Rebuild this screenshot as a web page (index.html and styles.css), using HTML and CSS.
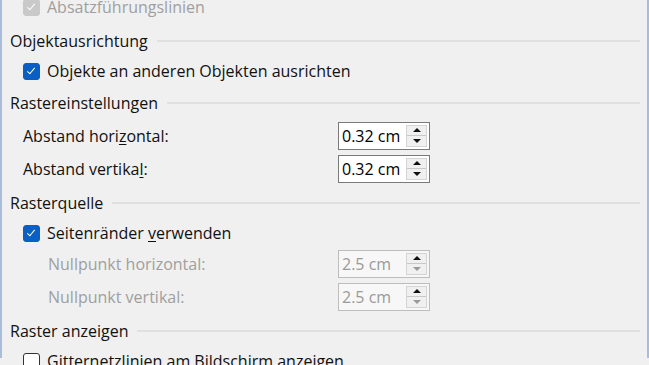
FILE: index.html
```html
<html>
<head>
    <meta charset="utf-8" />
    <title>Optionen - Raster</title>
    <link rel="stylesheet" href="styles.css">
</head>
<body>
    <div class="dialog">
        <div class="section first">
            <div class="row check disabled">
                <span class="box on"></span>
                <span>Absatzführungslinien</span>
            </div>
        </div>

        <div class="section">
            <div class="heading"><span>Objektausrichtung</span></div>
            <div class="row check">
                <span class="box on"></span>
                <span>Ob<u>j</u>ekte an anderen Objekten ausrichten</span>
            </div>
        </div>

        <div class="section">
            <div class="heading"><span>Rastereinstellungen</span></div>
            <div class="row field">
                <label>Abstand hori<u>z</u>ontal:</label>
                <div class="spin">
                    <span class="value">0.32 cm</span>
                    <span class="arrows"><i class="up"></i><i class="down"></i></span>
                </div>
            </div>
            <div class="row field">
                <label>Abstand vertika<u>l</u>:</label>
                <div class="spin">
                    <span class="value">0.32 cm</span>
                    <span class="arrows"><i class="up"></i><i class="down"></i></span>
                </div>
            </div>
        </div>

        <div class="section">
            <div class="heading"><span>Rasterquelle</span></div>
            <div class="row check">
                <span class="box on"></span>
                <span>Seitenränder <u>v</u>erwenden</span>
            </div>
            <div class="row field sub disabled">
                <label>Nullpunkt horizontal:</label>
                <div class="spin">
                    <span class="value">2.5 cm</span>
                    <span class="arrows"><i class="up"></i><i class="down"></i></span>
                </div>
            </div>
            <div class="row field sub disabled">
                <label>Nullpunkt vertikal:</label>
                <div class="spin">
                    <span class="value">2.5 cm</span>
                    <span class="arrows"><i class="up"></i><i class="down"></i></span>
                </div>
            </div>
        </div>

        <div class="section">
            <div class="heading"><span>Raster anzeigen</span></div>
            <div class="row check">
                <span class="box"></span>
                <span>Gitternetzlinien am Bildschirm anzeigen</span>
            </div>
        </div>
    </div>
</body>
</html>
```

FILE: styles.css
```css
html, body {
    margin: 0;
    height: 100%;
    overflow: hidden;
}
body {
    background-color: #f0f0f0;
    font-family: "Open Sans", "Noto Sans", sans-serif;
    font-size: 16px;
    color: #111;
}
.dialog {
    box-sizing: border-box;
    height: 100%;
    border-left: 2px solid #a9bcdb;
    border-right: 2px solid #a9bcdb;
    padding: 0 7px 0 8px;
}
.section {
    margin-bottom: 2px;
}
.section.first {
    margin-top: -7px;
    margin-bottom: 4px;
}
.heading {
    height: 32px;
    display: flex;
    flex-direction: row;
    align-items: center;
}
.heading::after {
    content: "";
    flex: 1;
    height: 2px;
    margin-left: 9px;
    background-color: #e0e0e0;
}
.row {
    display: flex;
    flex-direction: row;
    align-items: center;
    padding-left: 13px;
}
.check {
    height: 28px;
}
.field {
    height: 33px;
}
.sub {
    padding-left: 38px;
}
.disabled {
    color: #9f9f9f;
}
u {
    text-decoration-thickness: 1px;
    text-underline-offset: 2px;
}

/* checkbox */
.box {
    box-sizing: border-box;
    width: 17px;
    height: 17px;
    margin-right: 7px;
    border: 1px solid #333;
    border-radius: 3px;
    background-color: #fff;
    position: relative;
}
.box.on {
    border-color: #0a5fc5;
    background-color: #0a5fc5;
}
.box.on::after {
    content: "";
    position: absolute;
    left: 5px;
    top: 2px;
    width: 3px;
    height: 7px;
    border-right: 1.5px solid #fff;
    border-bottom: 1.5px solid #fff;
    transform: rotate(40deg);
}
.disabled .box.on {
    border-color: #c9c9c9;
    background-color: #c9c9c9;
}

/* spin box */
.field label {
    width: 315px;
}
.sub label {
    width: 290px;
}
.spin {
    box-sizing: border-box;
    width: 92px;
    height: 28px;
    border: 1px solid #7a7a7a;
    background-color: #fff;
    display: flex;
    flex-direction: row;
    align-items: center;
    padding: 2px 2px 2px 3px;
}
.disabled .spin {
    border-color: #bdbdbd;
    background-color: #f7f7f7;
}
.spin .value {
    flex: 1;
    color: #000;
}
.disabled .spin .value {
    color: #9a9a9a;
}
.arrows {
    box-sizing: border-box;
    width: 21px;
    height: 100%;
    border: 1px solid #d4d4d4;
    background-color: #f0f0f0;
    display: flex;
    flex-direction: column;
}
.arrows i {
    flex: 1;
    display: flex;
    align-items: center;
    justify-content: center;
}
.arrows i.up {
    border-bottom: 1px solid #c8c8c8;
}
.arrows i::after {
    content: "";
    width: 0;
    height: 0;
    border-left: 4px solid transparent;
    border-right: 4px solid transparent;
}
.arrows i.up::after {
    border-bottom: 4px solid #111;
}
.arrows i.down::after {
    border-top: 4px solid #111;
}
.disabled .arrows i.down::after {
    border-top-color: #9a9a9a;
}
```
